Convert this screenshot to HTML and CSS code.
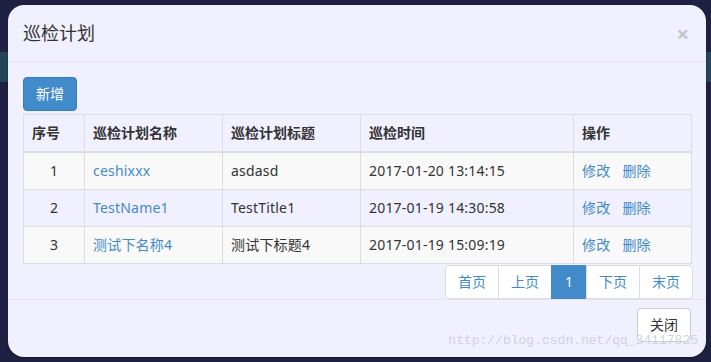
FILE: index.html
```html
<!DOCTYPE html>
<html lang="zh-CN">
<head>
    <meta charset="UTF-8">
    <meta name="viewport" content="width=device-width, initial-scale=1.0">
    <title>巡检计划</title>
    <link rel="stylesheet" href="styles.css">
</head>
<body>

    <div class="modal">
        <!-- Header -->
        <div class="modal-header">
            <h4 class="modal-title">巡检计划</h4>
            <span class="close">&times;</span>
        </div>

        <!-- Body -->
        <div class="modal-body">
            <button class="btn btn-primary">新增</button>

            <table class="plan-table">
                <thead>
                    <tr>
                        <th class="col-no">序号</th>
                        <th class="col-name">巡检计划名称</th>
                        <th class="col-title">巡检计划标题</th>
                        <th class="col-time">巡检时间</th>
                        <th class="col-op">操作</th>
                    </tr>
                </thead>
                <tbody>
                    <tr>
                        <td class="num">1</td>
                        <td><a href="#">ceshixxx</a></td>
                        <td>asdasd</td>
                        <td>2017-01-20 13:14:15</td>
                        <td><a href="#">修改</a><a href="#">删除</a></td>
                    </tr>
                    <tr>
                        <td class="num">2</td>
                        <td><a href="#">TestName1</a></td>
                        <td>TestTitle1</td>
                        <td>2017-01-19 14:30:58</td>
                        <td><a href="#">修改</a><a href="#">删除</a></td>
                    </tr>
                    <tr>
                        <td class="num">3</td>
                        <td><a href="#">测试下名称4</a></td>
                        <td>测试下标题4</td>
                        <td>2017-01-19 15:09:19</td>
                        <td><a href="#">修改</a><a href="#">删除</a></td>
                    </tr>
                </tbody>
            </table>

            <div class="pager-wrap">
                <ul class="pagination">
                    <li><a href="#">首页</a></li>
                    <li><a href="#">上页</a></li>
                    <li class="active"><a href="#">1</a></li>
                    <li><a href="#">下页</a></li>
                    <li><a href="#">末页</a></li>
                </ul>
            </div>
        </div>

        <!-- Footer -->
        <div class="modal-footer">
            <button class="btn btn-default">关闭</button>
        </div>

        <div class="watermark">http://blog.csdn.net/qq_34117825</div>
    </div>

</body>
</html>
```

FILE: styles.css
```css
body {
    font-family: "Noto Sans", "Noto Sans CJK SC", sans-serif;
    font-size: 14px;
    line-height: 1.42857;
    color: #333;
    margin: 0;
    padding: 5px 0 0 8px;
    height: 362px;
    box-sizing: border-box;
    overflow: hidden;
    background: linear-gradient(to bottom, #1e2142 0, #1e2142 52px, #24465a 52px, #24465a 82px, #1e2142 82px);
}
.modal {
    position: relative;
    width: 698px;
    height: 352px;
    background-color: #f0f0fe;
    border-radius: 16px;
    box-shadow: 0 1px 2px rgba(0, 0, 0, 0.4);
}
.modal-header {
    display: flex;
    justify-content: space-between;
    align-items: center;
    padding: 15px 17px 15px 15px;
    border-bottom: 1px solid #e3e3ea;
}
.modal-title {
    margin: 0;
    font-size: 18px;
    font-weight: normal;
    line-height: 26px;
}
.close {
    font-size: 22px;
    font-weight: bold;
    color: #c3c3cc;
    line-height: 1;
    cursor: pointer;
}
.modal-body {
    padding: 15px 15px 0 15px;
}
.btn {
    display: inline-block;
    font-family: inherit;
    font-size: 14px;
    line-height: 20px;
    padding: 6px 12px;
    border-radius: 4px;
    cursor: pointer;
}
.btn-primary {
    background-color: #428bca;
    border: 1px solid #357ebd;
    color: #fff;
}
.btn-default {
    background-color: #fff;
    border: 1px solid #ccc;
    color: #333;
}
.plan-table {
    width: 669px;
    margin-top: 3px;
    border-collapse: collapse;
    border: 1px solid #ddd;
}
.plan-table th, .plan-table td {
    border: 1px solid #ddd;
    padding: 8px;
    text-align: left;
    vertical-align: middle;
    line-height: 20px;
}
.plan-table td {
    letter-spacing: 0.2px;
}
.plan-table th {
    border-bottom: 2px solid #ddd;
}
.plan-table tbody tr:nth-child(odd) {
    background-color: #f9f9f9;
}
.plan-table td.num {
    text-align: center;
}
.col-no { width: 44px; }
.col-name { width: 121px; }
.col-title { width: 121px; }
.col-time { width: 196px; }
a {
    color: #428bca;
    text-decoration: none;
}
.plan-table td a + a {
    margin-left: 12px;
}
.pager-wrap {
    display: flex;
    justify-content: flex-end;
    width: 670px;
}
.pagination {
    display: flex;
    list-style: none;
    margin: 1px 0 0 0;
    padding: 0;
}
.pagination li a {
    display: block;
    padding: 6px 12px;
    line-height: 20px;
    background-color: #fff;
    border: 1px solid #ddd;
    margin-left: -1px;
}
.pagination li.active a {
    padding: 6px 13px;
}
.pagination li:first-child a {
    border-radius: 4px 0 0 4px;
}
.pagination li:last-child a {
    border-radius: 0 4px 4px 0;
}
.pagination li.active a {
    background-color: #428bca;
    border-color: #428bca;
    color: #fff;
}
.modal-footer {
    display: flex;
    justify-content: flex-end;
    padding: 8px 15px 15px 15px;
    border-top: 1px solid #e3e3ea;
}
.watermark {
    position: absolute;
    right: 8px;
    bottom: 6px;
    font-family: "Liberation Mono", monospace;
    font-size: 13px;
    color: #d2d2dc;
    pointer-events: none;
}
```
